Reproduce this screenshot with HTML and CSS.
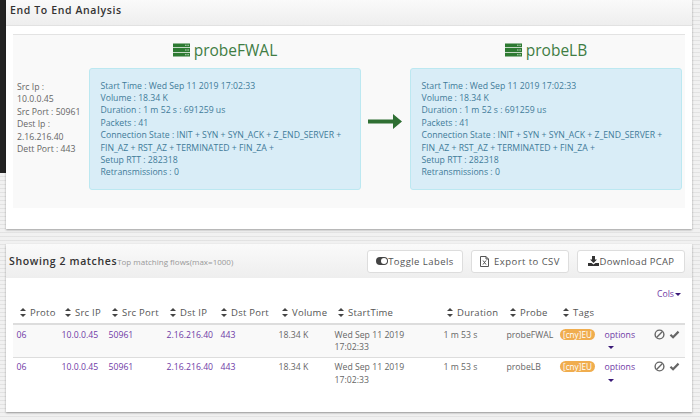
FILE: index.html
```html
<!DOCTYPE html>
<html lang="en">
<head>
<meta charset="utf-8">
<title>End To End Analysis</title>
<link rel="stylesheet" href="styles.css">
</head>
<body>
<svg class="defs" width="0" height="0" aria-hidden="true">
  <symbol id="server" viewBox="0 0 18 14">
    <path fill="currentColor" fill-rule="evenodd" d="M0 0h18v4H0zM13 1.4v1.2h1.2V1.400zM15.400 1.400v1.200h1.200V1.400zM0 5h18v4H0zM13 6.400v1.200h1.200V6.400zM15.400 6.400v1.200h1.200V6.400zM0 10h18v4H0zM13 11.400v1.200h1.200v-1.200zM15.400 11.400v1.200h1.200v-1.200z"/>
  </symbol>
  <symbol id="ban" viewBox="0 0 12 12">
    <circle cx="6" cy="6" r="4.800" fill="none" stroke="currentColor" stroke-width="1.500"/>
    <path d="M2.800 9.200 9.200 2.800" stroke="currentColor" stroke-width="1.500"/>
  </symbol>
  <symbol id="check" viewBox="0 0 12 10">
    <path d="M1.500 5.200 4.400 8 10.500 1.800" fill="none" stroke="currentColor" stroke-width="2.400"/>
  </symbol>
</svg>
<div class="page">
  <div class="rail"></div>
  <main class="main">
    <section class="panel panel-top">
      <h2 class="panel-head">End To End Analysis</h2>
      <div class="analysis">
        <div class="endpoint">
          <div>Src Ip :</div>
          <div>10.0.0.45</div>
          <div>Src Port : 50961</div>
          <div>Dest Ip :</div>
          <div>2.16.216.40</div>
          <div>Dett Port : 443</div>
        </div>
        <div class="node">
          <h3 class="node-title"><svg class="server"><use href="#server"/></svg>probeFWAL</h3>
          <div class="info">
            <div>Start Time : Wed Sep 11 2019 17:02:33</div>
            <div>Volume : 18.34 K</div>
            <div>Duration : 1 m 52 s : 691259 us</div>
            <div>Packets : 41</div>
            <div>Connection State : INIT + SYN + SYN_ACK + Z_END_SERVER + FIN_AZ + RST_AZ + TERMINATED + FIN_ZA +</div>
            <div>Setup RTT : 282318</div>
            <div>Retransmissions : 0</div>
          </div>
        </div>
        <div class="flow-arrow">
          <svg width="34" height="15" viewBox="0 0 34 15"><path fill="#2f6f33" d="M0 5.500h25V0l9 7.500-9 7.500V9.500H0z"/></svg>
        </div>
        <div class="node">
          <h3 class="node-title"><svg class="server"><use href="#server"/></svg>probeLB</h3>
          <div class="info">
            <div>Start Time : Wed Sep 11 2019 17:02:33</div>
            <div>Volume : 18.34 K</div>
            <div>Duration : 1 m 52 s : 691259 us</div>
            <div>Packets : 41</div>
            <div>Connection State : INIT + SYN + SYN_ACK + Z_END_SERVER + FIN_AZ + RST_AZ + TERMINATED + FIN_ZA +</div>
            <div>Setup RTT : 282318</div>
            <div>Retransmissions : 0</div>
          </div>
        </div>
      </div>
    </section>

    <section class="panel panel-flows">
      <header class="flows-head">
        <h2 class="flows-title">Showing 2 matches</h2>
        <span class="flows-sub">Top matching flows(max=1000)</span>
        <div class="actions">
          <button class="btn btn-toggle" type="button">
            <svg width="12" height="8" viewBox="0 0 12 8"><rect x="0" y="0" width="12" height="8" rx="4" fill="#444"/><circle cx="8" cy="4" r="3" fill="#fff"/></svg>Toggle Labels
          </button>
          <button class="btn btn-export" type="button">
            <svg width="9" height="11" viewBox="0 0 9 11"><path fill="none" stroke="#555" d="M.5.500h5.500l2.500 2.500v7.500H.5z"/><path fill="none" stroke="#555" d="M6 .5V3h2.500M3 4.500l3 4M6 4.500l-3 4"/></svg>Export to CSV
          </button>
          <button class="btn btn-download" type="button">
            <svg width="11" height="10" viewBox="0 0 11 10"><path fill="#333" d="M4 0h3v3.500h2L5.500 7 2 3.500h2zM0 7h3.500l2 1.500 2-1.500H11v3H0z"/></svg>Download PCAP
          </button>
        </div>
      </header>
      <div class="flows-body">
        <div class="cols-row"><a class="link cols">Cols<i class="caret"></i></a></div>
        <table class="flows">
          <colgroup>
            <col class="c1"><col class="c2"><col class="c3"><col class="c4"><col class="c5"><col class="c6"><col class="c7"><col class="c8"><col class="c9"><col class="c10"><col class="c11"><col class="c12">
          </colgroup>
          <thead>
            <tr>
              <th><i class="sort"></i>Proto</th>
              <th><i class="sort"></i>Src IP</th>
              <th><i class="sort"></i>Src Port</th>
              <th><i class="sort"></i>Dst IP</th>
              <th class="th-port"><i class="sort"></i>Dst Port</th>
              <th><i class="sort"></i>Volume</th>
              <th><i class="sort"></i>StartTime</th>
              <th><i class="sort"></i>Duration</th>
              <th><i class="sort"></i>Probe</th>
              <th><i class="sort"></i>Tags</th>
              <th></th>
              <th></th>
            </tr>
          </thead>
          <tbody>
            <tr class="odd">
              <td class="link">06</td><td class="link">10.0.0.45</td><td class="link">50961</td><td class="link">2.16.216.40</td><td class="link">443</td>
              <td>18.34 K</td><td>Wed Sep 11 2019 17:02:33</td><td>1 m 53 s</td><td>probeFWAL</td>
              <td><span class="tag">[cny]EU</span></td>
              <td class="link opt">options<br><i class="caret"></i></td>
              <td class="row-icons"><svg class="ic-ban"><use href="#ban"/></svg><svg class="ic-check"><use href="#check"/></svg></td>
            </tr>
            <tr>
              <td class="link">06</td><td class="link">10.0.0.45</td><td class="link">50961</td><td class="link">2.16.216.40</td><td class="link">443</td>
              <td>18.34 K</td><td>Wed Sep 11 2019 17:02:33</td><td>1 m 53 s</td><td>probeLB</td>
              <td><span class="tag">[cny]EU</span></td>
              <td class="link opt">options<br><i class="caret"></i></td>
              <td class="row-icons"><svg class="ic-ban"><use href="#ban"/></svg><svg class="ic-check"><use href="#check"/></svg></td>
            </tr>
          </tbody>
        </table>
      </div>
    </section>
  </main>
</div>
</body>
</html>
```

FILE: styles.css
```css
* { box-sizing: border-box; }
html, body { margin: 0; height: 100%; }
body {
  width: 700px;
  height: 420px;
  overflow: hidden;
  font-family: "Open Sans", sans-serif;
  font-size: 8.700px;
  line-height: 12.400px;
  color: #666;
  background-color: #f1f1f1;
  background-image:
    repeating-linear-gradient(0deg, rgba(0,0,0,0) 0 3px, rgba(200,200,200,.35) 3px 4px),
    repeating-linear-gradient(90deg, rgba(241,241,241,1) 0 6px, rgba(241,241,241,0) 6px 24px);
}
.defs { position: absolute; }
.page { display: flex; align-items: flex-start; }
.rail { width: 6px; height: 173px; background: #222; flex: none; }
.main { width: 686px; flex: none; }
.panel { background: #fff; box-shadow: 0 1px 2px rgba(0,0,0,.35); }
.panel-top { height: 229px; margin-bottom: 15px; }
.panel-flows { height: 168px; }

.panel-head {
  margin: 0;
  height: 26px;
  padding: 3px 4px 0;
  font-size: 10.500px;
  line-height: 14px;
  font-weight: 600;
  letter-spacing: .62px;
  color: #333;
  background: linear-gradient(#fafafa, #eeeeee);
  border-bottom: 1px solid #e2e2e2;
}
.analysis {
  margin: 8px 7px 0;
  height: 174px;
  padding-left: 4px;
  display: flex;
  background: #f9f9f9;
  border-top: 1px solid #e3e3e3;
}
.endpoint { width: 72px; padding-top: 46px; color: #666; flex: none; }
.node { width: 272px; flex: none; }
.node-title {
  margin: 0;
  height: 33px;
  padding-bottom: 3px;
  display: flex;
  align-items: center;
  justify-content: center;
  font-size: 15.500px;
  line-height: 30px;
  font-weight: 400;
  color: #3f7d44;
}
.server { width: 17px; height: 14px; margin-right: 4px; color: #2d7a32; }
.info {
  height: 122px;
  padding: 10.500px 10.500px;
  background: #d9edf7;
  border: 1px solid #bce8f1;
  border-radius: 3px;
  color: #3f7b99;
}
.flow-arrow { width: 49px; flex: none; padding: 79px 0 0 7px; line-height: 0; }

.flows-head {
  height: 34px;
  padding: 0 7px 0 3px;
  display: flex;
  align-items: center;
  background: linear-gradient(#fafafa, #eeeeee);
}
.flows-title {
  margin: 0;
  font-size: 10.500px;
  font-weight: 600;
  letter-spacing: .62px;
  color: #333;
}
.flows-sub { font-size: 8px; color: #999; padding-top: 2px; }
.actions { margin-left: auto; display: flex; gap: 8px; }
.btn {
  height: 23px;
  padding: 0;
  display: flex;
  align-items: center;
  justify-content: center;
  font: 9.500px "Open Sans", sans-serif;
  letter-spacing: .3px;
  color: #555;
  background: #fff;
  border: 1px solid #ddd;
  border-radius: 3px;
}
.btn-toggle { width: 96px; letter-spacing: .45px; }
.btn-export { width: 98px; letter-spacing: .45px; }
.btn-export svg { margin-right: 5px; }
.btn-download { width: 108px; }
.btn-download svg { margin-right: 1px; }

.flows-body { padding: 0 7px; }
.cols-row { height: 25px; padding: 10px 4px 0 0; text-align: right; }
.link { color: #6f3aa6; }
.caret {
  display: inline-block;
  width: 0;
  height: 0;
  margin-left: 1px;
  vertical-align: 1px;
  border: 3px solid transparent;
  border-bottom-width: 0;
  border-top-color: #3b1a78;
}
.flows { width: 672px; border-collapse: collapse; table-layout: fixed; }
.c1 { width: 45px; } .c2 { width: 47px; } .c3 { width: 58px; } .c4 { width: 54px; }
.c5 { width: 58px; } .c6 { width: 56px; } .c7 { width: 109px; } .c8 { width: 63px; }
.c9 { width: 53px; } .c10 { width: 45px; } .c11 { width: 49px; } .c12 { width: 35px; }
.flows th {
  height: 21px;
  padding: 0 0 0 7px;
  text-align: left;
  font-weight: 400;
  font-size: 9.500px;
  letter-spacing: .25px;
  color: #555;
  white-space: nowrap;
  border-bottom: 2px solid #ddd;
}
.flows th.th-port { padding-left: 4px; }
.sort {
  display: inline-block;
  position: relative;
  width: 6px;
  height: 8px;
  margin-right: 4px;
  vertical-align: -1px;
}
.sort::before, .sort::after {
  content: "";
  position: absolute;
  left: 0;
  border: 3px solid transparent;
}
.sort::before { top: -0.500px; border-top-width: 0; border-bottom-color: #444; }
.sort::after { bottom: -0.500px; border-bottom-width: 0; border-top-color: #444; }
.flows td {
  height: 33px;
  padding: 3.500px 0 0 3.500px;
  vertical-align: top;
  line-height: 12.800px;
  border-bottom: 1px solid #ddd;
}
.flows tbody tr:last-child td { border-bottom: 0; }
.odd td { background: #f9f9f9; }
.tag {
  display: inline-block;
  padding: 0 3.500px;
  font-size: 8.200px;
  line-height: 11px;
  color: #fff;
  background: #f0ad4e;
  border-radius: 6px;
}
.opt .caret { margin-left: 3px; }
.row-icons { white-space: nowrap; color: #666; }
.ic-ban { width: 11px; height: 11px; margin-right: 4px; vertical-align: -1px; }
.ic-check { width: 11px; height: 9px; }
```
